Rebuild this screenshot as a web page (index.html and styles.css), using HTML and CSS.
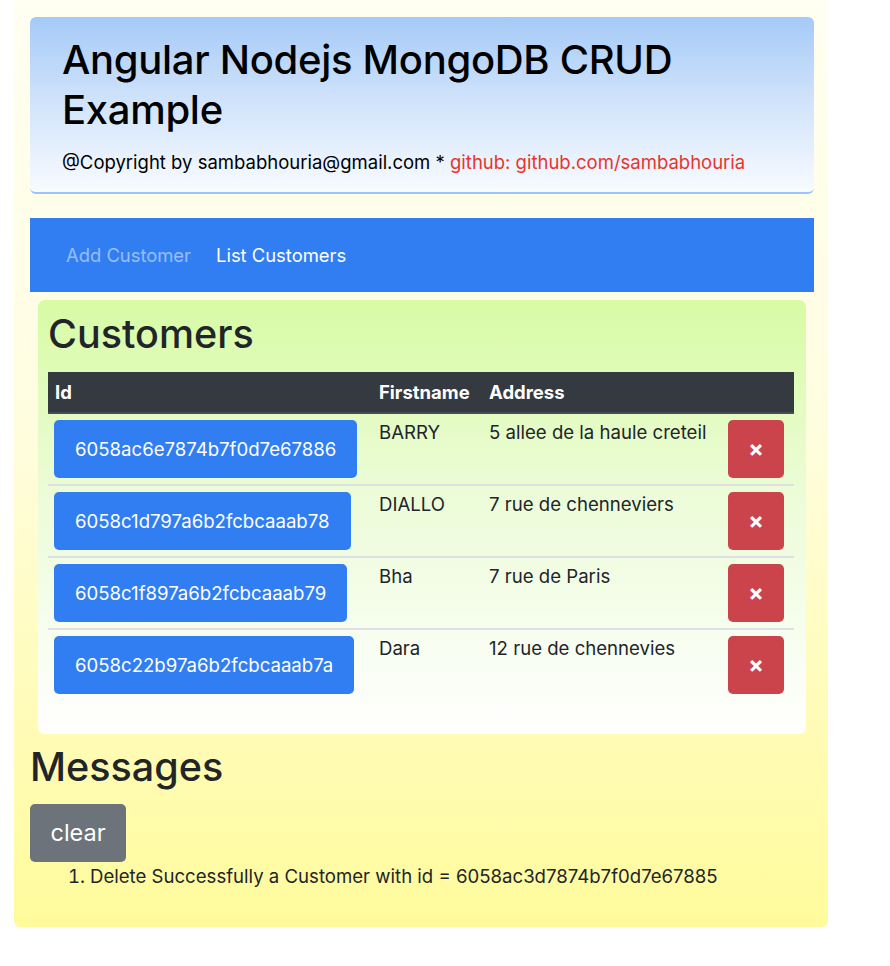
FILE: index.html
```html
<!DOCTYPE html>
<html lang="en">
<head>
<meta charset="utf-8">
<title>Angular Nodejs MongoDB CRUD Example</title>
<link rel="stylesheet" href="styles.css">
</head>
<body>
<div class="app">
  <header class="jumbo">
    <h1 class="jumbo-title">Angular Nodejs MongoDB CRUD Example</h1>
    <p class="jumbo-sub">@Copyright by sambabhouria@gmail.com * <span class="gh">github: github.com/sambabhouria</span></p>
  </header>

  <nav class="topnav">
    <a class="nav-link muted">Add Customer</a>
    <a class="nav-link active">List Customers</a>
  </nav>

  <section class="card">
    <h2 class="big-heading">Customers</h2>
    <table class="ctable">
      <colgroup>
        <col class="c-id"><col class="c-first"><col class="c-addr"><col class="c-act">
      </colgroup>
      <thead>
        <tr><th>Id</th><th>Firstname</th><th>Address</th><th></th></tr>
      </thead>
      <tbody>
        <tr>
          <td><button class="btn btn-id">6058ac6e7874b7f0d7e67886</button></td>
          <td>BARRY</td>
          <td>5 allee de la haule creteil</td>
          <td><button class="btn btn-del">×</button></td>
        </tr>
        <tr>
          <td><button class="btn btn-id">6058c1d797a6b2fcbcaaab78</button></td>
          <td>DIALLO</td>
          <td>7 rue de chenneviers</td>
          <td><button class="btn btn-del">×</button></td>
        </tr>
        <tr>
          <td><button class="btn btn-id">6058c1f897a6b2fcbcaaab79</button></td>
          <td>Bha</td>
          <td>7 rue de Paris</td>
          <td><button class="btn btn-del">×</button></td>
        </tr>
        <tr>
          <td><button class="btn btn-id">6058c22b97a6b2fcbcaaab7a</button></td>
          <td>Dara</td>
          <td>12 rue de chennevies</td>
          <td><button class="btn btn-del">×</button></td>
        </tr>
      </tbody>
    </table>
  </section>

  <section class="messages">
    <h2 class="big-heading msg-heading">Messages</h2>
    <button class="btn btn-clear">clear</button>
    <ol class="msg-list">
      <li>Delete Successfully a Customer with id = 6058ac3d7874b7f0d7e67885</li>
    </ol>
  </section>
</div>
</body>
</html>
```

FILE: styles.css
```css
* { box-sizing: border-box; }

body {
  margin: 0;
  background: #ffffff;
  font-family: Inter, "Noto Sans", "Liberation Sans", sans-serif;
  color: #212529;
  font-size: 18.6px;
  line-height: 1.5;
}

.app {
  margin-left: 14px;
  width: 814px;
  padding: 17px 14px 39px 16px;
  background: linear-gradient(to bottom, #fffff2 0%, #fffde0 45%, #fffb9c 100%);
  border-radius: 0 0 6px 6px;
}

.jumbo {
  background: linear-gradient(to bottom, #a5caf7 0%, #d2e4fb 50%, #f8fbff 100%);
  border-bottom: 2px solid #9dc4f6;
  border-radius: 6px;
  padding: 18px 32px 18px;
  margin-bottom: 24px;
}

.jumbo-title {
  margin: 0 0 15px;
  font-size: 40px;
  font-weight: 500;
  line-height: 50px;
  color: #000;
  letter-spacing: -0.3px;
}

.jumbo-sub {
  margin: 0;
  font-size: 18.5px;
  line-height: 24px;
  color: #000;
}

.gh { color: #e8352c; }

.topnav {
  background: #317ef3;
  height: 74px;
  display: flex;
  align-items: center;
  gap: 25px;
  padding: 2px 36px 0;
}

.nav-link {
  font-size: 18.4px;
  text-decoration: none;
  cursor: pointer;
}
.nav-link.muted { color: rgba(255, 255, 255, 0.5); }
.nav-link.active { color: #ffffff; }

.card {
  margin: 8px 8px 0;
  border-radius: 7px;
  background: linear-gradient(to bottom, #d8fba5 0%, #ecfcd8 45%, #ffffff 100%);
  padding: 10px 12px 34px 10px;
}

.big-heading {
  margin: 0 0 14px;
  font-size: 39.5px;
  font-weight: 500;
  line-height: 48px;
  color: #212529;
}

.ctable {
  width: 746px;
  border-collapse: collapse;
  table-layout: fixed;
}
.c-id { width: 324px; }
.c-first { width: 110px; }
.c-addr { width: 239px; }
.c-act { width: 73px; }

.ctable th {
  background: #343a40;
  color: #fff;
  text-align: left;
  font-weight: 700;
  font-size: 18.5px;
  padding: 8px 7px;
  line-height: 24px;
  border-bottom: 2px solid #454d55;
}

.ctable td {
  padding: 6px 7px;
  vertical-align: top;
  line-height: 24px;
  border-top: 2px solid #dde1e6;
}
.ctable td:first-child { padding-left: 6px; }
.ctable tbody tr:first-child td { border-top: none; }

.btn {
  border: none;
  border-radius: 5px;
  font-family: inherit;
  cursor: pointer;
  color: #fff;
}

.btn-id {
  background: #317ef3;
  font-size: 18.6px;
  line-height: 24px;
  padding: 17px 21px;
  height: 58px;
  display: block;
}

.btn-del {
  background: #cb444b;
  width: 56px;
  height: 58px;
  font-size: 23px;
  font-weight: 700;
  line-height: 1;
  display: flex;
  align-items: center;
  justify-content: center;
  padding: 0;
}

.messages { padding-top: 9px; }

.msg-heading { margin: 0 0 13px; }

.btn-clear {
  background: #6c737b;
  font-size: 23.5px;
  line-height: 30px;
  padding: 14px 0;
  height: 58px;
  width: 96px;
  display: block;
  text-align: center;
}

.msg-list {
  margin: 2px 0 0;
  padding-left: 60px;
  font-size: 18.6px;
  line-height: 24px;
}
```
